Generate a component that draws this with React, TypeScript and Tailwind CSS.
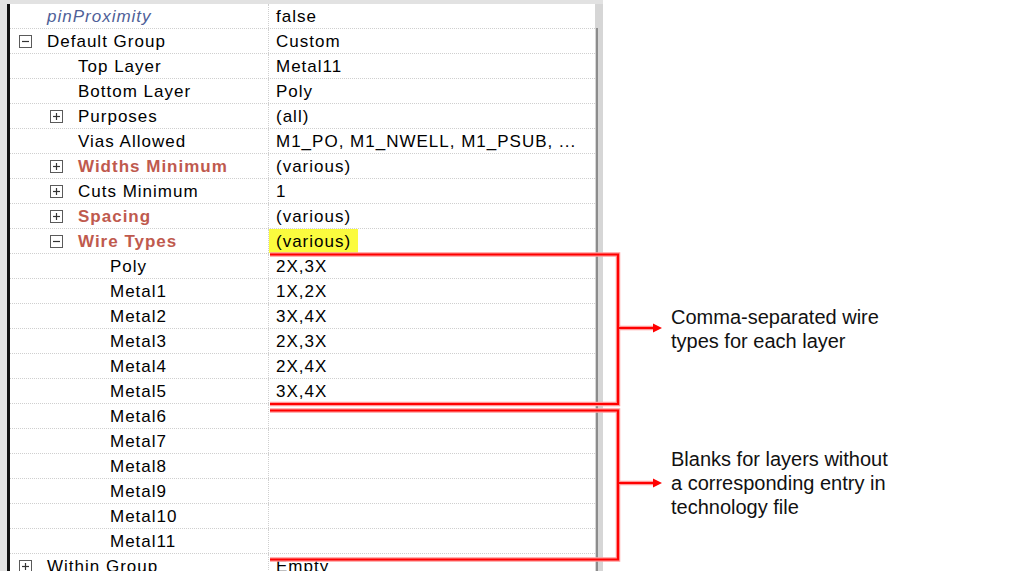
import React from "react"

type Row = {
  label: string
  value?: string
  level: number
  icon?: "plus" | "minus"
  kind?: "italic" | "red"
  highlight?: boolean
}

const rows: Row[] = [
  { label: "pinProximity", value: "false", level: 0, kind: "italic" },
  { label: "Default Group", value: "Custom", level: 0, icon: "minus" },
  { label: "Top Layer", value: "Metal11", level: 1 },
  { label: "Bottom Layer", value: "Poly", level: 1 },
  { label: "Purposes", value: "(all)", level: 1, icon: "plus" },
  { label: "Vias Allowed", value: "M1_PO, M1_NWELL, M1_PSUB, ...", level: 1 },
  { label: "Widths Minimum", value: "(various)", level: 1, icon: "plus", kind: "red" },
  { label: "Cuts Minimum", value: "1", level: 1, icon: "plus" },
  { label: "Spacing", value: "(various)", level: 1, icon: "plus", kind: "red" },
  { label: "Wire Types", value: "(various)", level: 1, icon: "minus", kind: "red", highlight: true },
  { label: "Poly", value: "2X,3X", level: 2 },
  { label: "Metal1", value: "1X,2X", level: 2 },
  { label: "Metal2", value: "3X,4X", level: 2 },
  { label: "Metal3", value: "2X,3X", level: 2 },
  { label: "Metal4", value: "2X,4X", level: 2 },
  { label: "Metal5", value: "3X,4X", level: 2 },
  { label: "Metal6", level: 2 },
  { label: "Metal7", level: 2 },
  { label: "Metal8", level: 2 },
  { label: "Metal9", level: 2 },
  { label: "Metal10", level: 2 },
  { label: "Metal11", level: 2 },
  { label: "Within Group", value: "Empty", level: 0, icon: "plus" },
]

const indent = ["pl-[37px]", "pl-[68px]", "pl-[100px]"]
const iconLeft = ["left-[9px]", "left-[40px]", "left-[72px]"]

function Expander({ type }: { type: "plus" | "minus" }) {
  return (
    <svg width="13" height="13" viewBox="0 0 13 13" className="block">
      <rect x="0.5" y="0.5" width="12" height="12" fill="#fff" stroke="#5a5a5a" />
      <path d="M3 6.5H10" stroke="#333" strokeWidth="1.2" />
      {type === "plus" && <path d="M6.5 3V10" stroke="#333" strokeWidth="1.2" />}
    </svg>
  )
}

function PropertyRow({ row }: { row: Row }) {
  const labelClass =
    row.kind === "italic"
      ? "italic text-[#4f5f98]"
      : row.kind === "red"
        ? "font-bold text-[#bf5a4e]"
        : "text-black"

  return (
    <div className="flex h-[25px] border-b border-dotted border-[#cfcfcf]">
      <div className={`relative flex w-[259px] shrink-0 items-center border-r border-dotted border-[#cfcfcf] ${indent[row.level]}`}>
        {row.icon && (
          <span className={`absolute top-[6px] ${iconLeft[row.level]}`}>
            <Expander type={row.icon} />
          </span>
        )}
        <span className={labelClass}>{row.label}</span>
      </div>
      <div className="flex min-w-0 flex-1 items-center">
        {row.highlight ? (
          <span className="flex h-full items-center bg-[#fbfb3e] pl-[7px] pr-[7px]">{row.value}</span>
        ) : (
          <span className="whitespace-nowrap pl-[7px]">{row.value}</span>
        )}
      </div>
    </div>
  )
}

function Callouts() {
  return (
    <svg width="1013" height="577" className="pointer-events-none absolute left-0 top-0">
      <g fill="none" strokeLinejoin="miter">
        <g stroke="#ff9a9a" strokeWidth="4.5">
          <path d="M270 254.5H618V404H270" />
          <path d="M618 328H655" />
          <path d="M270 410.5H618V559.5H270" />
          <path d="M618 483H655" />
        </g>
        <g stroke="#ff0000" strokeWidth="2.2">
          <path d="M270 254.5H618V404H270" />
          <path d="M618 328H655" />
          <path d="M270 410.5H618V559.5H270" />
          <path d="M618 483H655" />
        </g>
      </g>
      <polygon points="653,323.5 662,328 653,332.5" fill="#ff0000" />
      <polygon points="653,478.5 662,483 653,487.5" fill="#ff0000" />
    </svg>
  )
}

export default function App() {
  return (
    <div className="relative h-[577px] w-[1013px] overflow-hidden bg-white font-['Liberation_Sans',Arial,sans-serif]">
      <div className="flex">
        <div className="flex h-[571px] w-[603px] shrink-0 flex-col overflow-hidden bg-[#e2e2e2]">
          <div className="h-[4px] shrink-0" />
          <div className="flex min-h-0 flex-1">
            <div className="w-[7px] shrink-0 bg-[#e2e2e2]" />
            <div className="w-[3px] shrink-0 bg-[#111]" />
            <div className="min-w-0 flex-1 overflow-hidden bg-white text-[17px] leading-none tracking-[1px] text-black">
              {rows.map((row, i) => (
                <PropertyRow key={i} row={row} />
              ))}
            </div>
            <div className="flex w-[8px] shrink-0 flex-col bg-[#d6d6d6]">
              <div className="h-[24px] shrink-0" />
              <div className="ml-[1px] w-[2px] flex-1 bg-[#8c8c8c]" />
            </div>
          </div>
        </div>

        <div className="flex flex-col pl-[68px] pt-[305px] text-[20px] leading-[24px] text-[#111]">
          <p>
            Comma-separated wire
            <br />
            types for each layer
          </p>
          <p className="mt-[94px]">
            Blanks for layers without
            <br />
            a corresponding entry in
            <br />
            technology file
          </p>
        </div>
      </div>
      <Callouts />
    </div>
  )
}
